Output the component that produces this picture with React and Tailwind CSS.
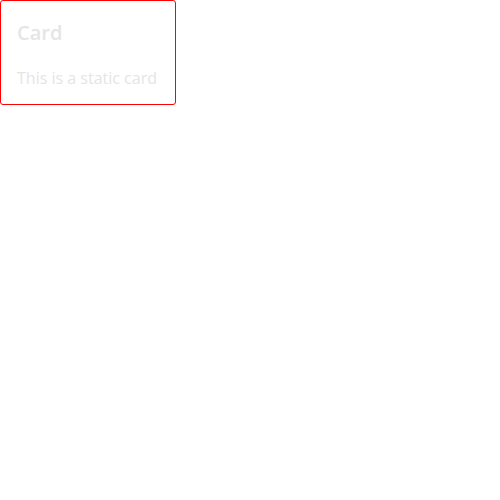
export default function App() {
	return (
		<div className="w-[176px] h-[105px] rounded-[3px] border border-[#ff0000] px-4 pt-[18px] bg-white" style={{ fontFamily: '"Open Sans", sans-serif' }}>
			<h2 className="text-xl leading-7 font-semibold text-[#e5e5e5]">Card</h2>
			<p className="mt-[19px] text-base text-[#e5e5e5]">This is a static card</p>
		</div>
	);
}
